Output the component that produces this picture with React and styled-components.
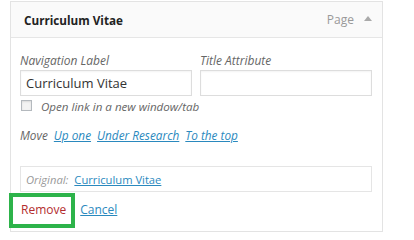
import React from "react";
import styled, { createGlobalStyle } from "styled-components";

const GlobalStyle = createGlobalStyle`
  html, body {
    margin: 0;
    padding: 0;
    background: #fff;
  }
  body {
    font-family: "Open Sans", "Liberation Sans", sans-serif;
    font-size: 12px;
    color: #333;
  }
`;

const Page = styled.div`
  padding: 1px 0 0 10px;
  width: 414px;
  height: 240px;
  box-sizing: border-box;
`;

const Panel = styled.div`
  width: 373px;
  box-sizing: border-box;
  border: 1px solid #e3e3e3;
  background: #fff;
`;

const Header = styled.div`
  display: flex;
  align-items: center;
  height: 35px;
  padding: 0 10px 0 13px;
  background: #fafafa;
  border-bottom: 1px solid #e6e6e6;
`;

const Title = styled.div`
  flex: 1;
  font-weight: 700;
  font-size: 11.7px;
  color: #222;
`;

const ItemType = styled.span`
  color: #999;
  font-size: 12px;
  margin-right: 10px;
`;

const Arrow = styled.span`
  width: 0;
  height: 0;
  border-left: 4px solid transparent;
  border-right: 4px solid transparent;
  border-bottom: 5px solid #aaa;
  margin-bottom: 2px;
`;

const Body = styled.div`
  padding: 14px 10px 12px 9px;
`;

const Fields = styled.div`
  display: grid;
  grid-template-columns: 172px 172px;
  column-gap: 8px;
`;

const Field = styled.label`
  display: flex;
  flex-direction: column;
`;

const LabelText = styled.span`
  font-style: italic;
  color: #666;
  line-height: 18px;
`;

const TextInput = styled.input`
  box-sizing: border-box;
  height: 26px;
  width: 100%;
  margin: 0;
  padding: 0 5px;
  border: 1px solid #ddd;
  box-shadow: inset 0 1px 2px rgba(0, 0, 0, 0.05);
  font-family: inherit;
  font-size: 13px;
  color: #333;
  outline: none;
`;

const CheckRow = styled.label`
  display: flex;
  align-items: center;
  height: 16px;
  margin-top: 2px;
  padding-left: 1px;
  font-style: italic;
  font-size: 11.6px;
  color: #666;
`;

const Box = styled.span`
  box-sizing: border-box;
  width: 11px;
  height: 11px;
  border: 1px solid #b4b9be;
  background: #f3f3f3;
  box-shadow: inset 0 1px 2px rgba(0, 0, 0, 0.1);
  margin-right: 9px;
  margin-top: -1px;
`;

const MoveRow = styled.div`
  display: flex;
  gap: 6px;
  margin-top: 12px;
  line-height: 18px;
  font-size: 11.8px;
  font-style: italic;
  color: #666;
`;

const Link = styled.a`
  color: ${p => (p.$danger ? "#b32d2e" : "#2a89be")};
  text-decoration: ${p => (p.$plain ? "none" : "underline")};
  font-style: ${p => (p.$upright ? "normal" : "inherit")};
  cursor: pointer;
`;

const Original = styled.div`
  display: flex;
  align-items: center;
  gap: 6px;
  box-sizing: border-box;
  height: 26px;
  margin-top: 22px;
  padding: 0 5px;
  border: 1px solid #e5e5e5;
  font-size: 11.2px;
`;

const OriginalLabel = styled.span`
  font-style: italic;
  color: #999;
`;

const Actions = styled.div`
  display: flex;
  gap: 14px;
  margin-top: 9px;
  padding-left: 1px;
  line-height: 18px;
  font-size: 12px;
`;

const Highlighted = styled.span`
  position: relative;

  &::after {
    content: "";
    position: absolute;
    left: -12px;
    right: -9px;
    top: -8px;
    bottom: -9px;
    border: 4px solid #2db34a;
    pointer-events: none;
  }
`;

export default function App() {
  return (
    <>
      <GlobalStyle />
      <Page>
        <Panel>
          <Header>
            <Title>Curriculum Vitae</Title>
            <ItemType>Page</ItemType>
            <Arrow />
          </Header>
          <Body>
            <Fields>
              <Field>
                <LabelText>Navigation Label</LabelText>
                <TextInput defaultValue="Curriculum Vitae" />
              </Field>
              <Field>
                <LabelText>Title Attribute</LabelText>
                <TextInput defaultValue="" />
              </Field>
            </Fields>
            <CheckRow>
              <Box />
              Open link in a new window/tab
            </CheckRow>
            <MoveRow>
              <span>Move</span>
              <Link>Up one</Link>
              <Link>Under Research</Link>
              <Link>To the top</Link>
            </MoveRow>
            <Original>
              <OriginalLabel>Original:</OriginalLabel>
              <Link $upright>Curriculum Vitae</Link>
            </Original>
            <Actions>
              <Highlighted>
                <Link $danger $plain>Remove</Link>
              </Highlighted>
              <Link>Cancel</Link>
            </Actions>
          </Body>
        </Panel>
      </Page>
    </>
  );
}
